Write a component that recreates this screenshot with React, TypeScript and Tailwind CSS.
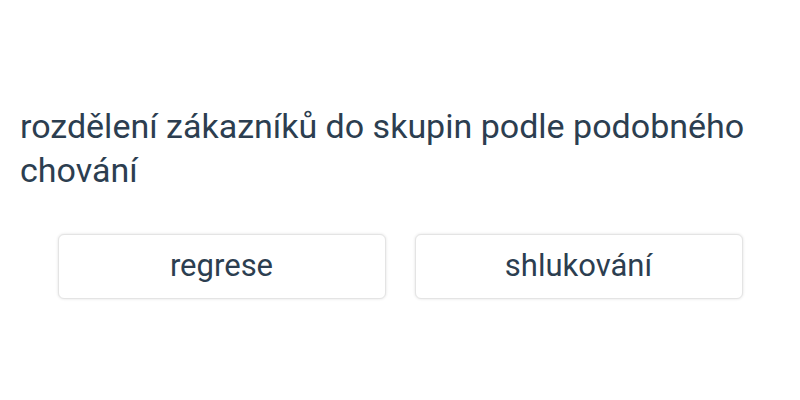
export default function App() {
  const options = ["regrese", "shlukování"];
  return (
    <div className="w-[800px] h-[400px] bg-white text-[#2c3e50] font-['Roboto',sans-serif]">
      <div className="pt-[104px] px-5">
        <p className="text-[34px] leading-[44px]">
          rozdělení zákazníků do skupin podle podobného chování
        </p>
      </div>
      <div className="flex justify-center gap-[29px] mt-[42px]">
        {options.map((o) => (
          <button
            key={o}
            className="w-[328px] h-[65px] bg-white border border-[#e4e4e4] rounded-md shadow-[0_0_3px_rgba(0,0,0,0.12)] text-[31px]"
          >
            {o}
          </button>
        ))}
      </div>
    </div>
  );
}
